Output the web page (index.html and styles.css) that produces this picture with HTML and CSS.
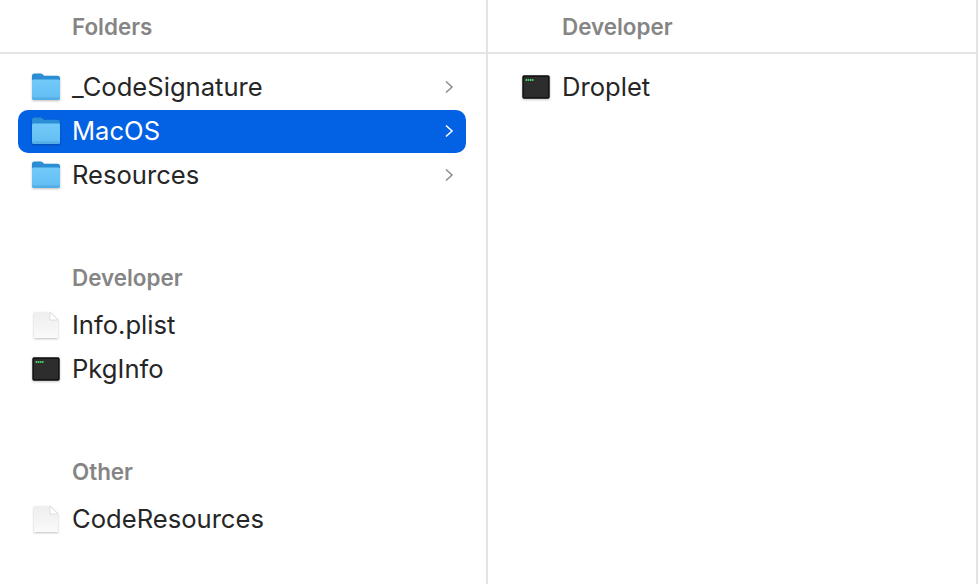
FILE: index.html
```html
<!DOCTYPE html>
<html lang="en">
<head>
  <meta charset="UTF-8" />
  <title>Droplet contents</title>
  <link rel="stylesheet" href="styles.css">
</head>
<body>

<svg class="icon-defs" width="0" height="0" aria-hidden="true">
  <defs>
    <linearGradient id="folderBody" x1="0" y1="0" x2="0" y2="1">
      <stop offset="0" stop-color="#72caf8"/>
      <stop offset="0.8" stop-color="#66c0f4"/>
      <stop offset="1" stop-color="#5db6ee"/>
    </linearGradient>
    <linearGradient id="docBody" x1="0" y1="0" x2="0" y2="1">
      <stop offset="0" stop-color="#eeeeee"/>
      <stop offset="1" stop-color="#fafafa"/>
    </linearGradient>
    <symbol id="folder" viewBox="0 0 30 28">
      <path d="M1 3Q1 0.500 3.500 0.500H9.500Q11 0.500 12 1.700L13 2.700H26.500Q29 2.700 29 5.200V10H1Z" fill="#2b8dd4"/>
      <path d="M1 8Q1 6.500 2.500 6.500H27.500Q29 6.500 29 8V25Q29 27 27 27H3Q1 27 1 25Z" fill="url(#folderBody)"/>
      <path d="M1 24.500H29V25Q29 27 27 27H3Q1 27 1 25Z" fill="#55ade8"/>
    </symbol>
    <symbol id="doc" viewBox="0 0 26 28">
      <path d="M1 1H17L25 9V27H1Z" fill="url(#docBody)"/>
      <path d="M17 1V9H25Z" fill="#ffffff" stroke="#d8d8d8" stroke-width="0.800" stroke-linejoin="round"/>
    </symbol>
    <symbol id="term" viewBox="0 0 28 24">
      <rect x="1" y="1" width="26" height="22" rx="1" fill="#2c2d2c" stroke="#0c0c0c" stroke-width="1.400"/>
      <path d="M3.500 5H12" stroke="#4cc765" stroke-width="2" stroke-dasharray="1.600 0.500"/>
    </symbol>
  </defs>
</svg>

<div class="browser">

  <section class="column col-left">
    <h2 class="col-title">Folders</h2>
    <div class="list">
      <div class="row">
        <span class="icon-box"><svg class="icon icon-folder"><use href="#folder"/></svg></span>
        <span class="name">_CodeSignature</span>
        <svg class="chevron" viewBox="0 0 10 14"><path d="M2 1.500L8 7L2 12.500"/></svg>
      </div>
      <div class="row selected">
        <span class="icon-box"><svg class="icon icon-folder"><use href="#folder"/></svg></span>
        <span class="name">MacOS</span>
        <svg class="chevron" viewBox="0 0 10 14"><path d="M2 1.500L8 7L2 12.500"/></svg>
      </div>
      <div class="row">
        <span class="icon-box"><svg class="icon icon-folder"><use href="#folder"/></svg></span>
        <span class="name">Resources</span>
        <svg class="chevron" viewBox="0 0 10 14"><path d="M2 1.500L8 7L2 12.500"/></svg>
      </div>
    </div>

    <h3 class="group-title">Developer</h3>
    <div class="list">
      <div class="row">
        <span class="icon-box"><svg class="icon icon-doc"><use href="#doc"/></svg></span>
        <span class="name">Info.plist</span>
      </div>
      <div class="row">
        <span class="icon-box"><svg class="icon icon-term"><use href="#term"/></svg></span>
        <span class="name">PkgInfo</span>
      </div>
    </div>

    <h3 class="group-title">Other</h3>
    <div class="list">
      <div class="row">
        <span class="icon-box"><svg class="icon icon-doc"><use href="#doc"/></svg></span>
        <span class="name">CodeResources</span>
      </div>
    </div>
  </section>

  <section class="column col-right">
    <h2 class="col-title">Developer</h2>
    <div class="list">
      <div class="row">
        <span class="icon-box"><svg class="icon icon-term"><use href="#term"/></svg></span>
        <span class="name">Droplet</span>
      </div>
    </div>
  </section>

</div>

</body>
</html>
```

FILE: styles.css
```css
html, body { margin: 0; height: 100%; overflow: hidden; background: #fff; }
body { font-family: Inter, "Noto Sans", sans-serif; color: #262626; }

.icon-defs { position: absolute; }

.browser {
  display: grid;
  grid-template-columns: 488px 490px;
  height: 584px;
}

.column { border-right: 2px solid #e4e4e4; box-sizing: border-box; }

.col-title {
  margin: 0;
  height: 54px;
  line-height: 53px;
  box-sizing: border-box;
  border-bottom: 2px solid #e4e4e4;
  padding-left: 72px;
  font-size: 22.4px;
  font-weight: 600;
  color: #858585;
}
.col-right .col-title { padding-left: 74px; }

.list { padding: 0 20px 0 18px; }
.col-left > .list:first-of-type { padding-top: 11px; }
.col-right .list { padding: 11px 0 0 20px; }

.group-title {
  margin: 68px 0 12px;
  padding-left: 72px;
  height: 26px;
  line-height: 26px;
  font-size: 22.4px;
  font-weight: 600;
  color: #858585;
}

.row {
  display: flex;
  align-items: center;
  height: 44px;
  padding-left: 13px;
  border-radius: 10px;
  font-size: 25.6px;
}
.row.selected {
  height: 43.5px;
  margin: 0.5px 0 0;
  background: #0361e4;
  color: #fff;
}

.icon-box {
  display: flex;
  justify-content: center;
  width: 30px;
  margin-right: 11px;
}
.icon { filter: drop-shadow(0 1px 1px rgba(0, 0, 0, 0.25)); }
.icon-folder { width: 30px; height: 28px; }
.icon-doc { width: 26px; height: 28px; }
.icon-term { width: 28px; height: 24px; }

.name { flex: 1; padding-bottom: 2px; }

.chevron {
  width: 10px;
  height: 14px;
  margin-right: 12px;
  fill: none;
  stroke: #8e8e8e;
  stroke-width: 1.600;
}
.selected .chevron { stroke: #fff; }
```
